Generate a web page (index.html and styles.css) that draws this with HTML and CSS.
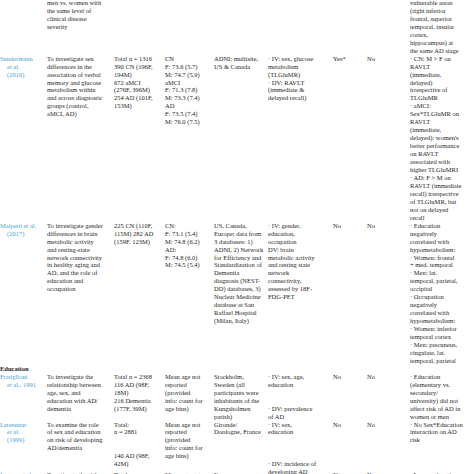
FILE: index.html
```html
<!DOCTYPE html>
<html>
<head>
<meta charset="utf-8">
<link rel="stylesheet" href="styles.css">
</head>
<body>
<table class="tbl">
<colgroup>
<col class="c-author"><col class="c-aim"><col class="c-sample"><col class="c-age"><col class="c-loc"><col class="c-var"><col class="c-yes"><col class="c-no"><col class="c-find">
</colgroup>
<tbody>
<tr>
<td class="author"></td>
<td>men vs. women with<br>the same level of<br>clinical disease<br>severity</td>
<td></td><td></td><td></td><td></td><td></td><td></td>
<td>vulnerable areas<br>(right inferior<br>frontal, superior<br>temporal, insular<br>cortex,<br>hippocampus) at<br>the same AD stage</td>
</tr>
<tr>
<td class="author">Sundermann<br>et al.<br>(2016)</td>
<td>To investigate sex<br>differences in the<br>association of verbal<br>memory and glucose<br>metabolism within<br>and across diagnostic<br>groups (control,<br>aMCI, AD)</td>
<td>Total n = 1316<br>390 CN (196F,<br>194M)<br>672 aMCI<br>(276F, 396M)<br>254 AD (101F,<br>153M)</td>
<td>CN<br>F: 73.6 (5.7)<br>M: 74.7 (5.9)<br>aMCI<br>F: 71.3 (7.8)<br>M: 73.3 (7.4)<br>AD<br>F: 73.5 (7.4)<br>M: 76.0 (7.5)</td>
<td>ADNI: multisite,<br>US &amp; Canada</td>
<td>· IV: sex, glucose<br>metabolism<br>(TLGluMR)<br>· DV: RAVLT<br>(immediate &amp;<br>delayed recall)</td>
<td>Yes*</td>
<td>No</td>
<td>· CN: M &gt; F on<br>RAVLT<br>(immediate,<br>delayed)<br>irrespective of<br>TLGluMR<br>· aMCI:<br>Sex*TLGluMR on<br>RAVLT<br>(immediate,<br>delayed): women's<br>better performance<br>on RAVLT<br>associated with<br>higher TLGluMRI<br>· AD: F &gt; M on<br>RAVLT (immediate<br>recall) irrespective<br>of TLGluMR, but<br>not on delayed<br>recall</td>
</tr>
<tr>
<td class="author">Malpetti et al.<br>(2017)</td>
<td>To investigate gender<br>differences in brain<br>metabolic activity<br>and resting-state<br>network connectivity<br>in healthy aging and<br>AD, and the role of<br>education and<br>occupation</td>
<td>225 CN (110F,<br>115M) 282 AD<br>(159F, 123M)</td>
<td>CN:<br>F: 73.1 (5.4)<br>M: 74.8 (6.2)<br>AD:<br>F: 74.8 (6.0)<br>M: 74.5 (5.4)</td>
<td>US, Canada,<br>Europe; data from<br>3 databases: 1)<br>ADNI, 2) Network<br>for Efficiency and<br>Standardization of<br>Dementia<br>diagnosis (NEST-<br>DD) databases, 3)<br>Nuclear Medicine<br>database at San<br>Raffael Hospital<br>(Milan, Italy)</td>
<td>· IV: gender,<br>education,<br>occupation<br>DV: brain<br>metabolic activity<br>and resting state<br>network<br>connectivity,<br>assessed by 18F-<br>FDG-PET</td>
<td>No</td>
<td>No</td>
<td>· Education<br>negatively<br>correlated with<br>hypometabolism:<br>· Women: frontal<br>+ med. temporal<br>· Men: lat.<br>temporal, parietal,<br>occipital<br>· Occupation<br>negatively<br>correlated with<br>hypometabolism:<br>· Women: inferior<br>temporal cortex<br>· Men: precuneus,<br>cingulate, lat.<br>temporal, parietal</td>
</tr>
<tr>
<td class="section" colspan="9">Education</td>
</tr>
<tr>
<td class="author">Fratiglioni<br>et al., 1991</td>
<td>To investigate the<br>relationship between<br>age, sex, and<br>education with AD/<br>dementia</td>
<td>Total n = 2368<br>116 AD (98F,<br>18M)<br>216 Dementia<br>(177F, 39M)</td>
<td>Mean age not<br>reported<br>(provided<br>info: count for<br>age bins)</td>
<td>Stockholm,<br>Sweden (all<br>participants were<br>inhabitants of the<br>Kungsholmen<br>parish)</td>
<td>· IV: sex, age,<br>education<br><br><br>· DV: prevalence<br>of AD</td>
<td>No</td>
<td>No</td>
<td>· Education<br>(elementary vs.<br>secondary/<br>university) did not<br>affect risk of AD in<br>women or men</td>
</tr>
<tr>
<td class="author">Letenneur<br>et al.<br>(1999)</td>
<td>To examine the role<br>of sex and education<br>on risk of developing<br>AD/dementia</td>
<td>Total:<br>n = 2881<br><br><br>140 AD (98F,<br>42M)</td>
<td>Mean age not<br>reported<br>(provided<br>info: count for<br>age bins)</td>
<td>Gironde/<br>Dordogne, France</td>
<td><div class="spill">· IV: sex,<br>education<br><br><br><br>· DV: incidence of<br>developing AD</div></td>
<td>No</td>
<td>No</td>
<td>· No Sex*Education<br>interaction on AD<br>risk</td>
</tr>
<tr class="last">
<td class="author">Launer et al.<br>(1999)</td>
<td>To estimate the risk<br>of AD</td>
<td>Total</td>
<td>Mean age not</td>
<td>Europe</td>
<td></td>
<td>No</td>
<td>Yes</td>
<td>· Lower education</td>
</tr>
</tbody>
</table>
</body>
</html>
```

FILE: styles.css
```css
html, body {
  margin: 0;
  padding: 0;
  background: #ffffff;
  overflow: hidden;
}
body {
  width: 474px;
  height: 474px;
}
.tbl {
  border-collapse: collapse;
  border-spacing: 0;
  table-layout: fixed;
  width: 540px;
  margin-top: -1px;
  font-family: "Liberation Serif", "Times New Roman", serif;
  font-size: 6.5px;
  line-height: 7.95px;
  color: #262626;
}
.c-author { width: 47px; }
.c-aim { width: 67px; }
.c-sample { width: 51px; }
.c-age { width: 49px; }
.c-loc { width: 54px; }
.c-var { width: 65px; }
.c-yes { width: 34px; }
.c-no { width: 43px; }
.c-find { width: 130px; }
.tbl td {
  padding: 0;
  vertical-align: top;
  white-space: nowrap;
  overflow: visible;
}
.tbl tr.last td {
  padding-top: 3px;
}
.tbl td.author {
  color: #4a9fcf;
  padding-left: 7px;
  text-indent: -7px;
}
.tbl td.section {
  font-weight: bold;
  color: #1a1a1a;
}
.spill {
  height: 47.7px;
  overflow: visible;
}
```
